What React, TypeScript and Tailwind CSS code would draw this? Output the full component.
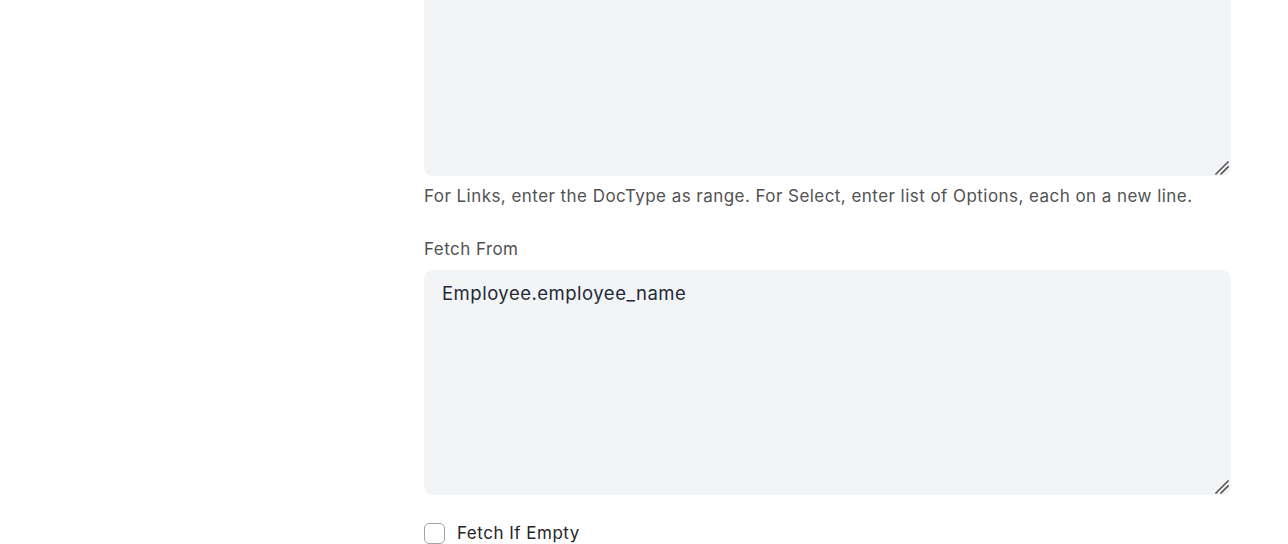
function ResizeGrip() {
  return (
    <svg
      className="pointer-events-none absolute bottom-[1px] right-[2px]"
      width="14"
      height="14"
      viewBox="0 0 14 14"
    >
      <path d="M1 13 L13 1 M6 13 L13 6" stroke="#555" strokeWidth="1.6" strokeLinecap="square" />
    </svg>
  );
}

export default function App() {
  return (
    <div className="h-[544px] overflow-hidden bg-white font-['Inter',sans-serif] tracking-[0.45px]">
      <div className="ml-[424px] w-[807px]">
        {/* Options field, scrolled past its top */}
        <div className="relative mt-[-24px]">
          <textarea
            className="block h-[200px] w-full resize-none rounded-[9px] bg-[#f3f4f6] px-[18px] py-[14px] text-[18.5px] text-[#1f2937] outline-none"
            defaultValue=""
          />
          <ResizeGrip />
        </div>
        <p className="mt-[8px] text-[17px] leading-[24px] text-[#525252]">
          For Links, enter the DocType as range. For Select, enter list of Options, each on a new line.
        </p>

        {/* Fetch From */}
        <div className="mt-[29px]">
          <label className="block text-[17px] leading-[24px] text-[#525252]">Fetch From</label>
          <div className="relative mt-[9px]">
            <textarea
              className="block h-[225px] w-full resize-none rounded-[9px] bg-[#f3f4f6] px-[18px] py-[11px] text-[18.5px] leading-[24px] tracking-[0.5px] text-[#1f2937] outline-none"
              defaultValue="Employee.employee_name"
            />
            <ResizeGrip />
          </div>
        </div>

        <label className="mt-[26px] flex items-center gap-[12px]">
          <span className="h-[21px] w-[21px] rounded-[5px] border border-[#a3a3a3] bg-white" />
          <span className="text-[17px] leading-[24px] tracking-[0.5px] text-[#262626]">Fetch If Empty</span>
        </label>
      </div>
    </div>
  );
}
